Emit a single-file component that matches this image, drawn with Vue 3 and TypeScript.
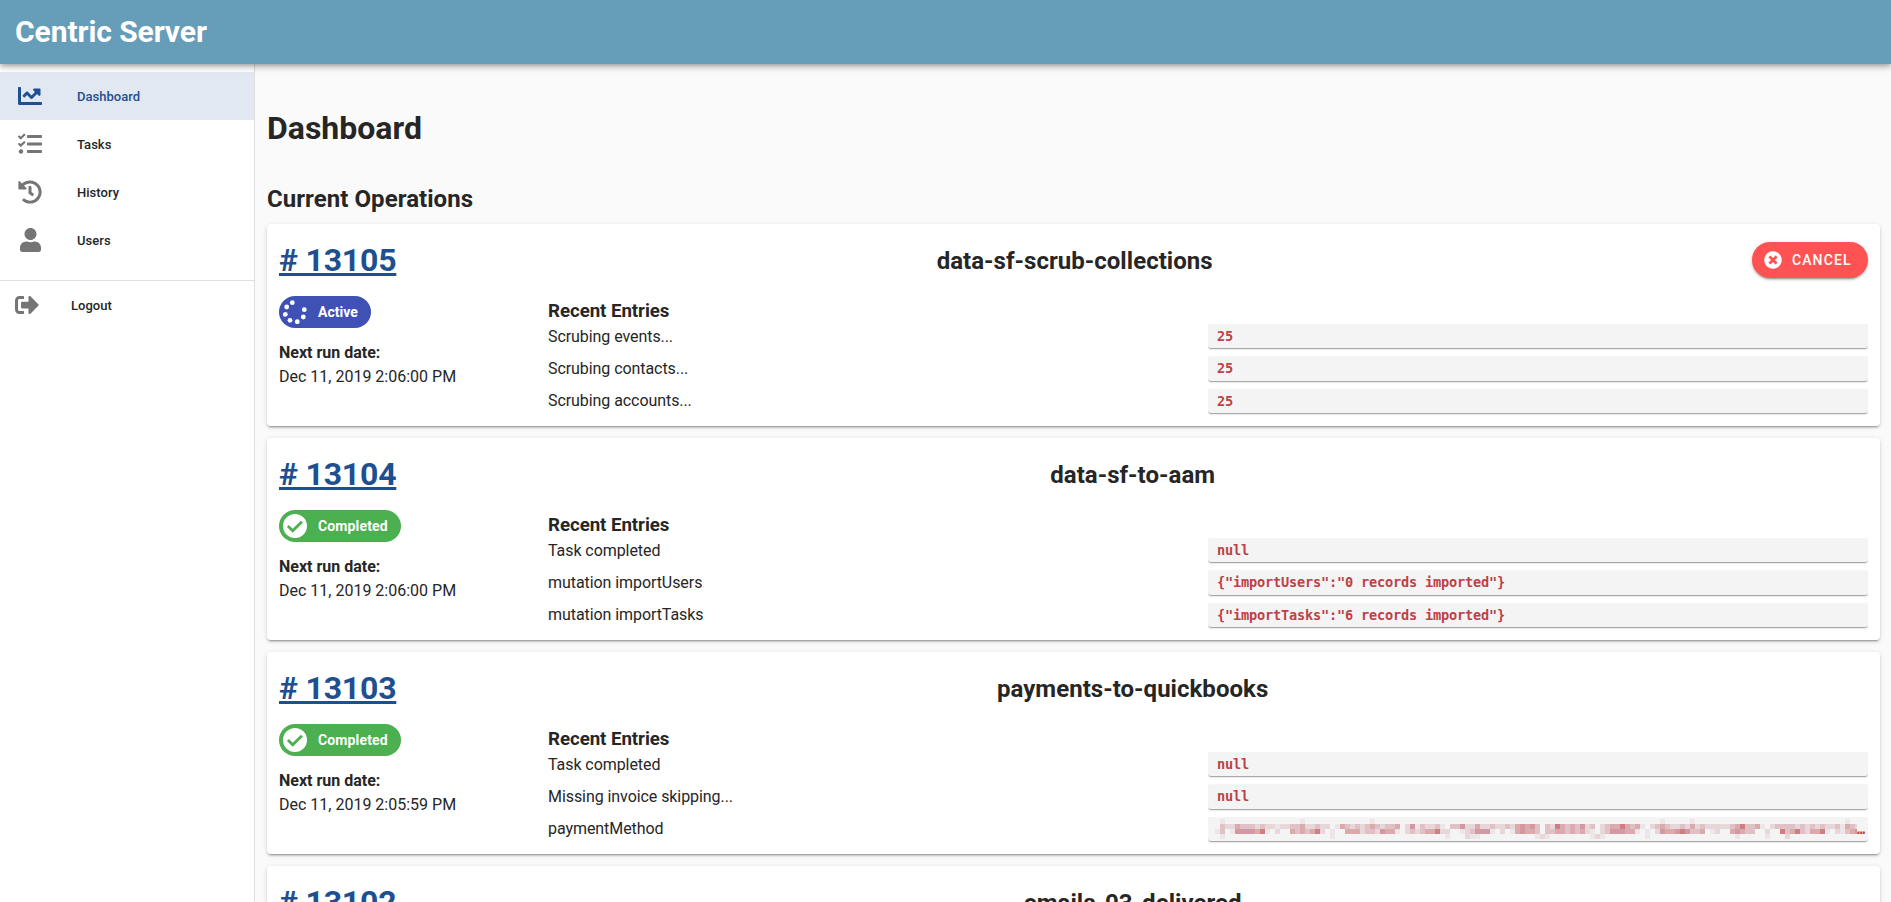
<script setup lang="ts">
interface Entry { label: string; value: string; masked?: boolean }
interface Operation { id: number; name: string; active?: boolean; date: string; entries: Entry[] }
interface NavItem { label: string; viewBox: string; path: string; width: number; active?: boolean }
interface Cell { x: number; y: number; fill: string }

const nav: NavItem[] = [
  { label: 'Dashboard', viewBox: '0 0 512 512', width: 24, active: true, path: 'M496 384H64V80c0-8.840-7.160-16-16-16H16C7.160 64 0 71.160 0 80v336c0 17.670 14.330 32 32 32h464c8.840 0 16-7.160 16-16v-32c0-8.840-7.160-16-16-16zM464 96H345.940c-21.380 0-32.090 25.850-16.970 40.970l32.400 32.400L288 242.750l-73.370-73.370c-12.500-12.500-32.760-12.500-45.250 0l-68.690 68.690c-6.250 6.250-6.250 16.380 0 22.630l22.620 22.620c6.250 6.250 16.380 6.250 22.630 0L192 237.250l73.370 73.370c12.500 12.500 32.760 12.500 45.250 0l96-96 32.400 32.400c15.120 15.120 40.970 4.410 40.970-16.970V112c.01-8.840-7.150-16-15.990-16z' },
  { label: 'Tasks', viewBox: '0 0 512 512', width: 24, path: 'M139.610 35.500a12 12 0 0 0-17 0L58.930 98.810l-22.700-22.120a12 12 0 0 0-17 0L3.530 92.410a12 12 0 0 0 0 17l47.590 47.400a12.780 12.780 0 0 0 17.610 0l15.590-15.620L156.520 69a12.090 12.090 0 0 0 .09-17zm0 159.190a12 12 0 0 0-17 0l-63.680 63.720-22.700-22.100a12 12 0 0 0-17 0L3.530 252a12 12 0 0 0 0 17L51 316.500a12.770 12.770 0 0 0 17.600 0l15.700-15.690 72.200-72.220a12 12 0 0 0 .09-16.900zM64 368c-26.490 0-48.590 21.500-48.590 48S37.530 464 64 464a48 48 0 0 0 0-96zm432 16H208a16 16 0 0 0-16 16v32a16 16 0 0 0 16 16h288a16 16 0 0 0 16-16v-32a16 16 0 0 0-16-16zm0-320H208a16 16 0 0 0-16 16v32a16 16 0 0 0 16 16h288a16 16 0 0 0 16-16V80a16 16 0 0 0-16-16zm0 160H208a16 16 0 0 0-16 16v32a16 16 0 0 0 16 16h288a16 16 0 0 0 16-16v-32a16 16 0 0 0-16-16z' },
  { label: 'History', viewBox: '0 0 512 512', width: 24, path: 'M504 255.531c.253 136.640-111.180 248.372-247.820 248.468-59.015.042-113.223-20.530-155.822-54.911-11.077-8.940-11.905-25.541-1.839-35.607l11.267-11.267c8.609-8.609 22.353-9.551 31.891-1.984C173.062 425.135 212.781 440 256 440c101.705 0 184-82.311 184-184 0-101.705-82.311-184-184-184-48.814 0-93.149 18.969-126.068 49.932l50.754 50.754c10.080 10.080 2.941 27.314-11.313 27.314H24c-8.837 0-16-7.163-16-16V38.627c0-14.254 17.234-21.393 27.314-11.314l49.372 49.372C129.209 34.136 189.552 8 256 8c136.810 0 247.747 110.780 248 247.531zm-180.912 78.784l9.823-12.630c8.138-10.463 6.253-25.542-4.210-33.679L288 256.349V152c0-13.255-10.745-24-24-24h-16c-13.255 0-24 10.745-24 24v135.651l65.409 50.874c10.463 8.137 25.541 6.253 33.679-4.210z' },
  { label: 'Users', viewBox: '0 0 448 512', width: 21, path: 'M224 256c70.700 0 128-57.300 128-128S294.700 0 224 0 96 57.300 96 128s57.300 128 128 128zm89.600 32h-16.700c-22.200 10.200-46.900 16-72.900 16s-50.600-5.800-72.900-16h-16.700C60.200 288 0 348.200 0 422.400V464c0 26.500 21.500 48 48 48h352c26.500 0 48-21.500 48-48v-41.600c0-74.200-60.200-134.400-134.400-134.400z' },
]

const operations: Operation[] = [
  { id: 13105, name: 'data-sf-scrub-collections', active: true, date: 'Dec 11, 2019 2:06:00 PM', entries: [
    { label: 'Scrubing events...', value: '25' }, { label: 'Scrubing contacts...', value: '25' }, { label: 'Scrubing accounts...', value: '25' }] },
  { id: 13104, name: 'data-sf-to-aam', date: 'Dec 11, 2019 2:06:00 PM', entries: [
    { label: 'Task completed', value: 'null' }, { label: 'mutation importUsers', value: '{"importUsers":"0 records imported"}' }, { label: 'mutation importTasks', value: '{"importTasks":"6 records imported"}' }] },
  { id: 13103, name: 'payments-to-quickbooks', date: 'Dec 11, 2019 2:05:59 PM', entries: [
    { label: 'Task completed', value: 'null' }, { label: 'Missing invoice skipping...', value: 'null' }, { label: 'paymentMethod', value: '…', masked: true }] },
  { id: 13102, name: 'emails-03-delivered', date: '', entries: [] },
]

const dots: number[][] = [[9.300, 2.700], [3.700, 7], [2.300, 14.300], [7, 20.300], [14.300, 21.700], [20.300, 17], [21.300, 9.700]]

// Redacted value: a mosaic of 5px cells, one letter per shade.
const shades: Record<string, string> = { a: '#ede6e8', b: '#e8d7d8', c: '#e0c2c6', d: '#dbaaad', e: '#d298a3', f: '#cd7f83' }
const mosaicRows: string[] = [
  '.cbbdcccbcbbabbccdbbcbb.adcbcbcdcbccd.beacb' + 'bca.ccebbdbbcbbcbdedec.cbfdcdcebc.bcddfdcda' + '.bcdcbbcbdbcbbbbbcdfccda.bccccbcbcbcbbcadcb',
  'ac.aeeeedfa.b..dcdcdfb.a..dddbccbedda.bcbcd' + 'dfbb..abceeea.b.adeddc.ccddcdcdba.bceeedda.' + 'a.beddefeccd.ab..dedcc..b..fcdfcbddfa.bacde',
]
const sparse: [number, number, string][] = [
  [1, 0, 'a'], [17, 0, 'a'], [31, 0, 'a'], [89, 0, 'a'], [95, 0, 'a'], [126, 0, 'a'],
  [1, 3, 'a'], [23, 3, 'a'], [46, 3, 'a'], [50, 3, 'b'], [51, 3, 'a'], [52, 3, 'a'], [64, 3, 'a'], [65, 3, 'b'], [66, 3, 'a'],
  [75, 3, 'a'], [76, 3, 'b'], [77, 3, 'a'], [86, 3, 'a'], [104, 3, 'a'], [110, 3, 'a'], [114, 3, 'b'],
]
const cells: Cell[] = [
  ...mosaicRows.flatMap((row, r) => [...row].map((ch, i) => ({ x: i * 5, y: (r + 1) * 5, fill: shades[ch] ?? 'none' }))),
  ...sparse.map(([x, y, ch]) => ({ x: x * 5, y: y * 5, fill: shades[ch] })),
]
</script>

<template>
  <div class="app">
    <header class="bar"><h1>Centric Server</h1></header>
    <div class="body">
      <nav class="side">
        <ul>
          <li v-for="n in nav" :key="n.label" :class="{ on: n.active }">
            <span class="ico"><svg :viewBox="n.viewBox" :width="n.width" height="24"><path :d="n.path" /></svg></span><span class="txt">{{ n.label }}</span>
          </li>
        </ul>
        <div class="out">
          <span class="ico"><svg viewBox="0 0 512 512" width="24" height="24"><path d="M497 273L329 441c-15 15-41 4.500-41-17v-96H152c-13.300 0-24-10.700-24-24v-96c0-13.300 10.700-24 24-24h136V88c0-21.400 25.900-32 41-17l168 168c9.300 9.400 9.300 24.600 0 34zM192 436v-40c0-6.600-5.400-12-12-12H96c-17.700 0-32-14.300-32-32V160c0-17.700 14.300-32 32-32h84c6.600 0 12-5.400 12-12V76c0-6.600-5.400-12-12-12H96c-53 0-96 43-96 96v192c0 53 43 96 96 96h84c6.600 0 12-5.400 12-12z" /></svg></span><span class="txt">Logout</span>
        </div>
      </nav>
      <main>
        <h2>Dashboard</h2>
        <h3>Current Operations</h3>
        <section v-for="o in operations" :key="o.id" class="card">
          <div class="top">
            <a>#&nbsp;{{ o.id }}</a>
            <h4>{{ o.name }}</h4>
            <button v-if="o.active"><svg viewBox="0 0 512 512" width="18" height="18"><path d="M256 8C119 8 8 119 8 256s111 248 248 248 248-111 248-248S393 8 256 8zm121.600 313.100c4.700 4.700 4.700 12.300 0 17L338 377.600c-4.700 4.700-12.300 4.700-17 0L256 312l-65.100 65.600c-4.700 4.700-12.300 4.700-17 0L134.400 338c-4.700-4.700-4.700-12.300 0-17l65.600-65-65.600-65.100c-4.700-4.700-4.700-12.300 0-17l39.600-39.600c4.700-4.700 12.300-4.700 17 0l65 65.700 65.100-65.600c4.700-4.700 12.300-4.700 17 0l39.600 39.600c4.700 4.700 4.700 12.300 0 17L312 256l65.600 65.100z" /></svg>Cancel</button>
          </div>
          <div v-if="o.entries.length" class="info">
            <div class="state">
              <span class="chip" :class="{ active: o.active }">
                <svg v-if="o.active" viewBox="0 0 24 24" width="24" height="24"><circle v-for="(p, i) in dots" :key="i" :cx="p[0]" :cy="p[1]" r="2.400" /></svg>
                <svg v-else viewBox="0 0 24 24" width="24" height="24"><circle cx="12" cy="12" r="12" /><path class="tick" d="M4.900 12.100l4.800 4.600 9.200-8.900" /></svg>
                {{ o.active ? 'Active' : 'Completed' }}
              </span>
              <strong>Next run date:</strong>
              <span>{{ o.date }}</span>
            </div>
            <div class="entries">
              <h5>Recent Entries</h5>
              <div v-for="e in o.entries" :key="e.label" class="entry">
                <span>{{ e.label }}</span>
                <code v-if="e.masked" class="masked"><svg width="642" height="20"><rect v-for="(c, i) in cells" :key="i" :x="c.x" :y="c.y" width="5" height="5" :fill="c.fill" /></svg>{{ e.value }}</code>
                <code v-else>{{ e.value }}</code>
              </div>
            </div>
          </div>
        </section>
      </main>
    </div>
  </div>
</template>

<style>
body { margin: 0; overflow: hidden; }
</style>
<style scoped>
* { box-sizing: border-box; }
h1, h2, h3, h4, h5, ul { margin: 0; padding: 0; font-weight: 700; }
svg { fill: currentColor; display: block; flex: none; }
.app { height: 902px; display: flex; flex-direction: column; overflow: hidden; background: #fafafa; color: #262626; font: 16px/24px Roboto, sans-serif; }
.bar { height: 64px; flex: none; display: flex; align-items: center; padding: 0 15px; background: #669db9; color: #fff; z-index: 1; box-shadow: 0 2px 4px -1px rgba(0,0,0,.2), 0 4px 5px rgba(0,0,0,.14), 0 1px 10px rgba(0,0,0,.12); }
h1 { font-size: 30px; line-height: 32px; letter-spacing: -.08px; }
.body { flex: 1; min-height: 0; display: flex; }
.side { width: 255px; flex: none; background: #fff; border-right: 1px solid #dfdfdf; font-size: 13px; font-weight: 500; }
ul { list-style: none; padding: 8px 0 16px; border-bottom: 1px solid #dfdfdf; font-weight: 500; }
li, .out { height: 48px; display: flex; align-items: center; padding-left: 18px; }
.txt { padding-top: 2px; letter-spacing: .03px; }
.out { padding-left: 15px; }
.out .ico { width: 56px; }
.on, .on .ico { color: #1d4f91; }
.on { background: #e2e8f2; }
.ico { width: 59px; color: #757575; }
.ico svg[width="21"] { margin-left: 2px; }
main { flex: 1; min-width: 0; padding: 0 11px 0 12px; }
h2 { font-size: 32px; line-height: 48px; margin-top: 40px; }
h3 { font-size: 24px; line-height: 36px; margin: 29px 0 7px; letter-spacing: .06px; }
.card { height: 202px; margin-bottom: 12px; padding: 12px; background: #fff; border-radius: 4px; box-shadow: 0 3px 1px -2px rgba(0,0,0,.2), 0 2px 2px rgba(0,0,0,.14), 0 1px 5px rgba(0,0,0,.12); }
.top { height: 48px; display: flex; align-items: center; }
a { font-size: 32px; line-height: 48px; font-weight: 700; color: #1d4f91; text-decoration: underline; letter-spacing: -.2px; }
h4 { flex: 1; text-align: center; font-size: 24px; padding: 2px 0 0 1px; letter-spacing: .03px; }
button { height: 36px; width: 116px; border: 0; padding: 0 0 0 12px; border-radius: 18px; display: flex; align-items: center; gap: 10px; background: #ff5252; color: #fff; font: 500 14px Roboto, sans-serif; letter-spacing: 1.100px; text-transform: uppercase; box-shadow: 0 3px 1px -2px rgba(0,0,0,.2), 0 2px 2px rgba(0,0,0,.14), 0 1px 5px rgba(0,0,0,.12); }
.info { display: flex; }
.state { width: 269px; padding-top: 12px; display: flex; flex-direction: column; align-items: flex-start; }
.chip { height: 32px; border-radius: 16px; padding: 0 13px 0 4px; margin-bottom: 13px; display: flex; align-items: center; gap: 11px; background: #4caf50; color: #fff; font-size: 14px; font-weight: 700; letter-spacing: .14px; }
.chip.active { background: #3f51b5; letter-spacing: 0; }
.tick { fill: none; stroke: #4caf50; stroke-width: 2.800; }
.entries { flex: 1; min-width: 0; padding-top: 12px; }
h5 { font-size: 18.720px; line-height: 27px; height: 27px; padding-top: 2px; letter-spacing: -.06px; }
.entry { height: 32.400px; display: flex; }
.entry span, code { width: 50%; flex: none; }
.entry span { padding-top: 1.600px; letter-spacing: -.07px; }
code { height: 24.400px; margin-top: 1px; padding: 0 8px 0 9px; border-radius: 3px; background: #f4f4f4; color: #bd4147; font: 700 13.600px/24px "DejaVu Sans Mono", monospace; letter-spacing: -.187px; clip-path: inset(0 0 -4px 0); box-shadow: 0 2px 1px -1px rgba(0,0,0,.2), 0 1px 1px rgba(0,0,0,.14), 0 1px 3px rgba(0,0,0,.12); }
.masked { display: flex; padding: 0 3px 0 7px; }
.masked svg { margin-top: 2.200px; shape-rendering: crispEdges; }
</style>
